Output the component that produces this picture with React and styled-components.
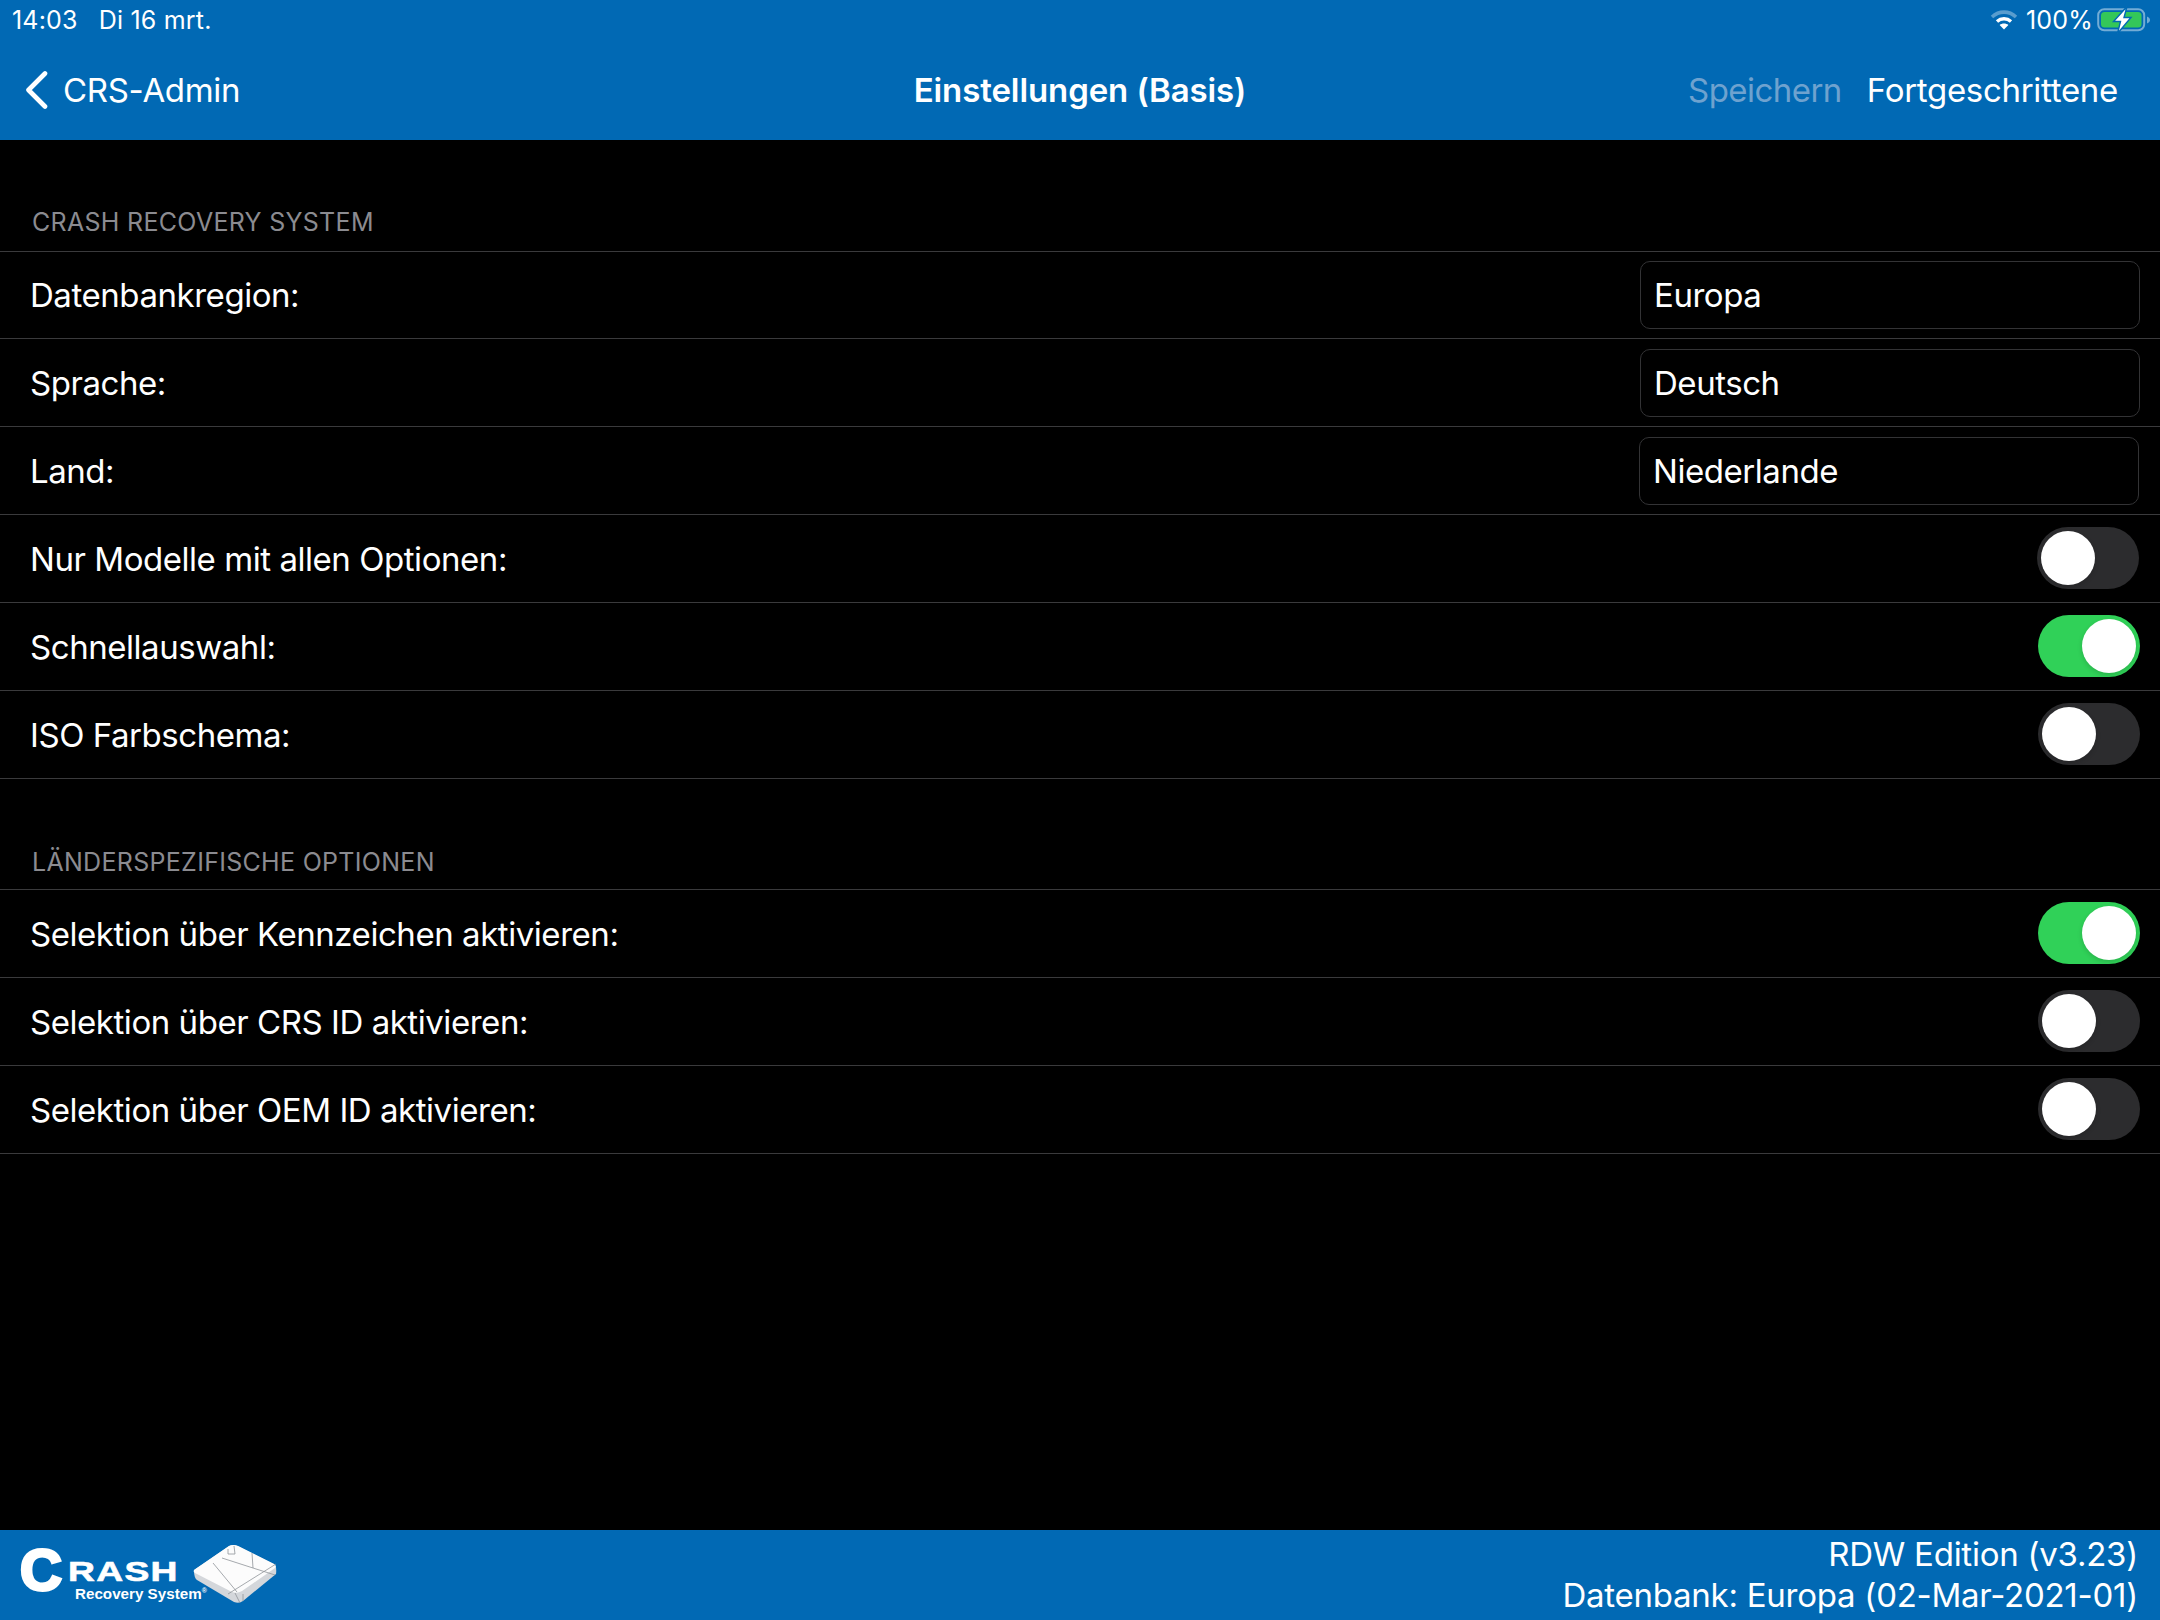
import React from 'react'
import styled, { createGlobalStyle } from 'styled-components'

const GlobalStyle = createGlobalStyle`
  html, body {
    margin: 0;
    padding: 0;
    background: #000;
  }
  * { box-sizing: border-box; }
`

function WifiIcon() {
  return (
    <svg width="28" height="22" viewBox="0 0 28 22">
      <path d="M2 8 C9 1.5 19 1.5 26 8" fill="none" stroke="#fff" strokeOpacity="0.35" strokeWidth="3.6" />
      <path d="M7 12.4 C11 8.8 17 8.8 21 12.4" fill="none" stroke="#fff" strokeWidth="3.4" />
      <path d="M14 20.5 L9.6 16 C12 14 16 14 18.4 16 Z" fill="#fff" />
    </svg>
  )
}

function BatteryIcon() {
  return (
    <BatteryArt width="54" height="28" viewBox="0 0 54 28">
      <rect x="1.2" y="3.2" width="46" height="21" rx="6" fill="none" stroke="#fff" strokeOpacity="0.45" strokeWidth="2" />
      <rect x="4" y="6" width="40.5" height="15.5" rx="3.5" fill="#34c759" />
      <path d="M50 10.5 C52 11.2 53 12.5 53 14 C53 15.5 52 16.8 50 17.5 Z" fill="#fff" fillOpacity="0.45" />
      <path d="M30 0.5 L16.5 15.5 H23.5 L20.5 27.5 L34 11.5 H27 Z" fill="#fff" stroke="#0169b4" strokeWidth="1.4" />
    </BatteryArt>
  )
}

function BackChevron() {
  return (
    <svg width="24" height="38" viewBox="0 0 24 38">
      <path d="M20 2.5 L3.5 19 L20 35.5" fill="none" stroke="#fff" strokeWidth="4.6" strokeLinecap="round" strokeLinejoin="round" />
    </svg>
  )
}

function LogoBox() {
  return (
    <LogoBoxArt width="86" height="62" viewBox="0 0 86 62">
      <path d="M1 26 L36 2 Q40 0 45 2 L81 20 Q84 22 83 30 L50 57 Q46 60 41 58 L4 36 Q1 34 1 26 Z" fill="#d4d7db" />
      <path d="M1 26 L36 2 Q40 0 45 2 L81 20 Q84 22 82 24 L49 47 Q44 50 39 48 L2 29 Q0 28 1 26 Z" fill="#fcfcfc" />
      <path d="M59 9 L60 24 M83 20 L35 50 M20 19 L44 48 M29 14 L60 24 L82 31 M35 5 L35 10 L42 10 L41 2 M42 49 L47 59 M50 50 L50 57" fill="none" stroke="#8f9499" strokeWidth="0.8" />
    </LogoBoxArt>
  )
}

function CrashLogo() {
  return (
    <LogoWrap>
      <LogoInitial>C</LogoInitial>
      <LogoWords>
        <LogoRest>RASH</LogoRest>
        <LogoSub>Recovery System<sup>®</sup></LogoSub>
      </LogoWords>
      <LogoBox />
    </LogoWrap>
  )
}

function Row({ label, children }) {
  return (
    <RowWrap>
      <RowLabel>{label}</RowLabel>
      {children}
    </RowWrap>
  )
}

function Field({ value, shift }) {
  return (
    <FieldBox $shift={shift}>{value}</FieldBox>
  )
}

function Toggle({ on, shift }) {
  return (
    <ToggleTrack $on={on} $shift={shift}>
      <ToggleKnob $on={on} />
    </ToggleTrack>
  )
}

export default function App() {
  return (
    <Page>
      <GlobalStyle />
      <Header>
        <StatusBar>
          <StatusLeft>
            <span>14:03</span>
            <span>Di 16 mrt.</span>
          </StatusLeft>
          <StatusRight>
            <WifiIcon />
            <span>100%</span>
            <BatteryIcon />
          </StatusRight>
        </StatusBar>
        <NavBar>
          <BackLink>
            <BackChevron />
            <span>CRS-Admin</span>
          </BackLink>
          <NavTitle>Einstellungen (Basis)</NavTitle>
          <NavActions>
            <NavAction $disabled>Speichern</NavAction>
            <NavAction>Fortgeschrittene</NavAction>
          </NavActions>
        </NavBar>
      </Header>

      <Content>
        <Section>
          <SectionTitle>CRASH RECOVERY SYSTEM</SectionTitle>
          <Row label="Datenbankregion:"><Field value="Europa" /></Row>
          <Row label="Sprache:"><Field value="Deutsch" /></Row>
          <Row label="Land:"><Field value="Niederlande" shift={1} /></Row>
          <Row label="Nur Modelle mit allen Optionen:"><Toggle shift={1} /></Row>
          <Row label="Schnellauswahl:"><Toggle on /></Row>
          <Row label="ISO Farbschema:"><Toggle /></Row>
        </Section>
        <Section>
          <SectionTitle>LÄNDERSPEZIFISCHE OPTIONEN</SectionTitle>
          <Row label="Selektion über Kennzeichen aktivieren:"><Toggle on /></Row>
          <Row label="Selektion über CRS ID aktivieren:"><Toggle /></Row>
          <Row label="Selektion über OEM ID aktivieren:"><Toggle /></Row>
        </Section>
      </Content>

      <Footer>
        <CrashLogo />
        <FooterInfo>
          <span>RDW Edition (v3.23)</span>
          <span>Datenbank: Europa (02-Mar-2021-01)</span>
        </FooterInfo>
      </Footer>
    </Page>
  )
}

const Page = styled.div`
  width: 2160px;
  height: 1620px;
  display: flex;
  flex-direction: column;
  background: #000;
  color: #fff;
  font-family: Inter, "Noto Sans", sans-serif;
  overflow: hidden;
`

const Header = styled.header`
  height: 140px;
  background: #0169b4;
  flex-shrink: 0;
`

const StatusBar = styled.div`
  height: 40px;
  padding: 0 9px 0 12px;
  display: flex;
  align-items: center;
  justify-content: space-between;
  font-size: 25px;
  letter-spacing: 0.2px;
`

const StatusLeft = styled.div`
  display: flex;
  gap: 21px;
`

const StatusRight = styled.div`
  display: flex;
  align-items: center;
  gap: 8px;
`

const BatteryArt = styled.svg`
  margin-left: -4px;
`

const NavBar = styled.nav`
  position: relative;
  height: 100px;
  padding: 0 42px 0 25px;
  display: flex;
  align-items: center;
  justify-content: space-between;
  font-size: 33px;
  letter-spacing: -0.3px;
`

const BackLink = styled.div`
  display: flex;
  align-items: center;
  gap: 14px;
`

const NavTitle = styled.div`
  position: absolute;
  left: 0;
  right: 0;
  text-align: center;
  font-weight: 600;
  letter-spacing: -0.1px;
`

const NavActions = styled.div`
  display: flex;
  gap: 25px;
`

const NavAction = styled.span`
  color: ${(p) => (p.$disabled ? '#6ea2cf' : '#fff')};
  letter-spacing: ${(p) => (p.$disabled ? '-0.55px' : '-0.3px')};
`

const Content = styled.main`
  flex: 1;
`

const SectionTitle = styled.h2`
  height: 111px;
  margin: 0;
  padding: 0 0 14px 32px;
  display: flex;
  align-items: flex-end;
  font-size: 25px;
  font-weight: 400;
  letter-spacing: 0.3px;
  color: #8b8b90;
`

const RowWrap = styled.div`
  height: 88px;
  padding: 0 20px 1px 30px;
  display: flex;
  align-items: center;
  justify-content: space-between;
  border-top: 1px solid #3a3a3c;
`

const Section = styled.section`
  display: flex;
  flex-direction: column;
  border-bottom: 1px solid #3a3a3c;

  &:first-child ${SectionTitle} + ${RowWrap} {
    height: 87px;
    padding-bottom: 2px;
  }

  & + & ${SectionTitle} {
    height: 110px;
    padding-bottom: 12px;
  }
`

const RowLabel = styled.span`
  margin-top: 2px;
  font-size: 33px;
  letter-spacing: -0.45px;
`

const FieldBox = styled.div`
  width: 500px;
  height: 68px;
  margin-top: 2px;
  margin-right: ${(p) => (p.$shift ? p.$shift : 0)}px;
  padding: 0 13px;
  display: flex;
  align-items: center;
  font-size: 33px;
  letter-spacing: -0.45px;
  border: 1px solid #333335;
  border-radius: 10px;
`

const ToggleTrack = styled.div`
  width: 102px;
  height: 62px;
  margin-right: ${(p) => (p.$shift ? p.$shift : 0)}px;
  padding: 4px;
  display: flex;
  justify-content: ${(p) => (p.$on ? 'flex-end' : 'flex-start')};
  border-radius: 31px;
  background: ${(p) => (p.$on ? '#30d158' : '#2c2c2e')};
`

const ToggleKnob = styled.div`
  width: 54px;
  height: 54px;
  border-radius: 50%;
  background: #fff;
  box-shadow: 0 2px 5px rgba(0, 0, 0, 0.15);
`

const Footer = styled.footer`
  height: 90px;
  flex-shrink: 0;
  padding: 0 22px 0 20px;
  display: flex;
  align-items: center;
  justify-content: space-between;
  background: #0169b4;
`

const LogoWrap = styled.div`
  align-self: stretch;
  display: flex;
  align-items: flex-start;
  font-family: "Liberation Sans", sans-serif;
  font-weight: 700;
`

const LogoInitial = styled.span`
  width: 48px;
  margin-top: 19px;
  font-size: 57px;
  line-height: 42px;
  transform: scaleX(1.02);
  transform-origin: left center;
  -webkit-text-stroke: 3px #fff;
`

const LogoWords = styled.div`
  width: 125px;
  padding-top: 32px;
  display: flex;
  flex-direction: column;
`

const LogoRest = styled.span`
  font-size: 28px;
  line-height: 20px;
  letter-spacing: 1px;
  transform: scaleX(1.33);
  transform-origin: left center;
  -webkit-text-stroke: 0.6px #fff;
`

const LogoSub = styled.div`
  margin: 4px 0 0 7px;
  font-size: 15.2px;
  line-height: 15px;
  white-space: nowrap;
  sup {
    font-size: 7px;
    line-height: 0;
  }
`

const LogoBoxArt = styled.svg`
  margin-top: 14px;
`

const FooterInfo = styled.div`
  display: flex;
  flex-direction: column;
  align-items: flex-end;
  font-size: 33px;
  letter-spacing: -0.25px;
  line-height: 41px;
`
